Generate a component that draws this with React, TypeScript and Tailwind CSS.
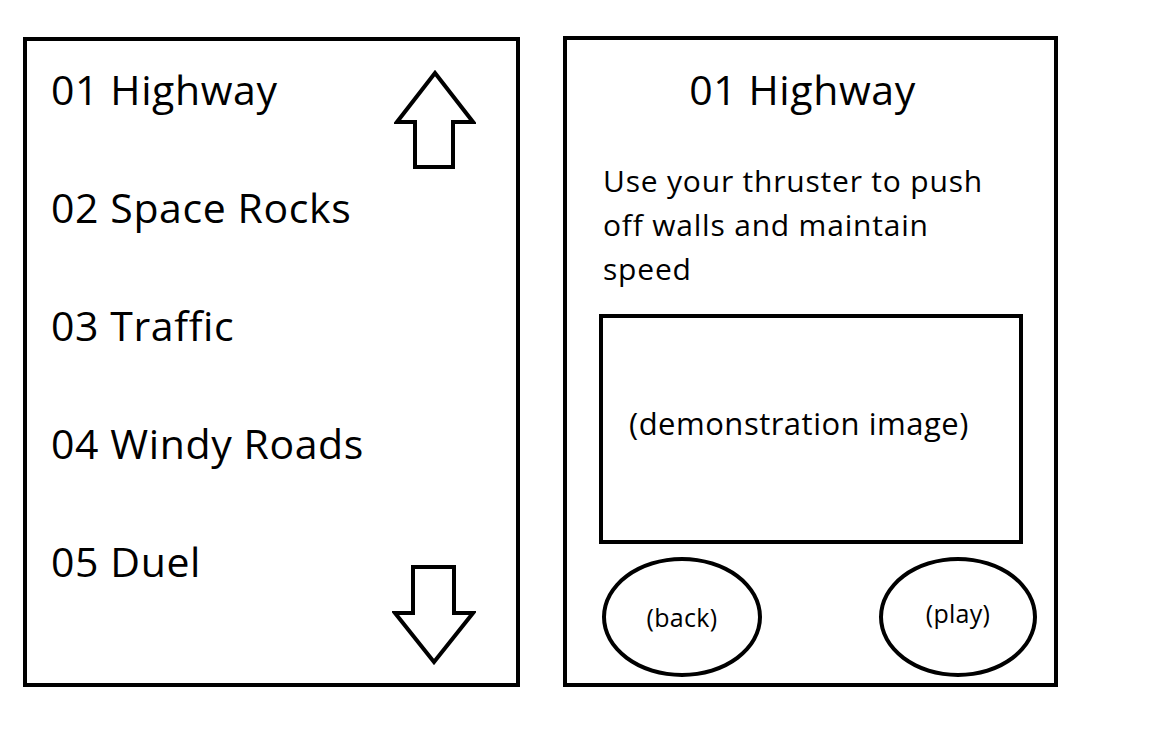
import React from "react";

function UpArrow() {
  return (
    <svg width="82" height="100" viewBox="0 0 82 100" fill="none">
      <polygon
        points="41,3 79,52 59,52 59,97 21,97 21,52 3,52"
        stroke="#000"
        strokeWidth="4"
        fill="#fff"
      />
    </svg>
  );
}

function DownArrow() {
  return (
    <svg width="84" height="101" viewBox="0 0 84 101" fill="none">
      <polygon
        points="21,3 62,3 62,49 81,49 42,98 3,49 21,49"
        stroke="#000"
        strokeWidth="4"
        fill="#fff"
      />
    </svg>
  );
}

const levels = ["01 Highway", "02 Space Rocks", "03 Traffic", "04 Windy Roads", "05 Duel"];

export default function App() {
  return (
    <div
      className="w-[1165px] h-[732px] bg-white text-black flex items-start pl-[23px] pt-[36px] gap-[43px]"
      style={{ fontFamily: '"Open Sans", "Noto Sans", sans-serif' }}
    >
      {/* Level list panel */}
      <div className="mt-[1px] w-[497px] h-[650px] border-[4px] border-black flex justify-between">
        <ul className="flex flex-col gap-[66px] pl-[24px] pt-[22px]">
          {levels.map((l) => (
            <li key={l} className="text-[41px] leading-[52px] whitespace-nowrap tracking-[0.6px] font-medium">
              {l}
            </li>
          ))}
        </ul>
        <div className="flex flex-col justify-between items-end pt-[29px] pb-[18px] pr-[40px]">
          <UpArrow />
          <DownArrow />
        </div>
      </div>

      {/* Level detail panel */}
      <div className="w-[495px] h-[651px] border-[4px] border-black flex flex-col">
        <h1 className="text-[41px] leading-[52px] text-center pr-[16px] pt-[23px] tracking-[0.6px] font-medium">
          01 Highway
        </h1>
        <p className="mt-[44px] pl-[36px] text-[30px] leading-[44px] tracking-[0.8px] font-medium">
          <span className="block">Use your thruster to push</span>
          <span className="block">off walls and maintain</span>
          <span className="block">speed</span>
        </p>
        <div className="mt-[23px] ml-[32px] w-[424px] h-[230px] border-[4px] border-black flex items-center pl-[26px] pb-[12px]">
          <span className="text-[31px] leading-[40px] whitespace-nowrap tracking-[0.5px] font-medium">
            (demonstration image)
          </span>
        </div>
        <div className="mt-[13px] flex justify-between pl-[35px] pr-[17px]">
          <button className="w-[160px] h-[120px] rounded-[50%] border-[4px] border-black flex items-center justify-center text-[25px] leading-[30px] tracking-[0.3px] font-medium">
            (back)
          </button>
          <button className="w-[158px] h-[120px] rounded-[50%] border-[4px] border-black flex items-center justify-center pb-[8px] text-[25px] leading-[30px] tracking-[0.3px] font-medium">
            (play)
          </button>
        </div>
      </div>
    </div>
  );
}
